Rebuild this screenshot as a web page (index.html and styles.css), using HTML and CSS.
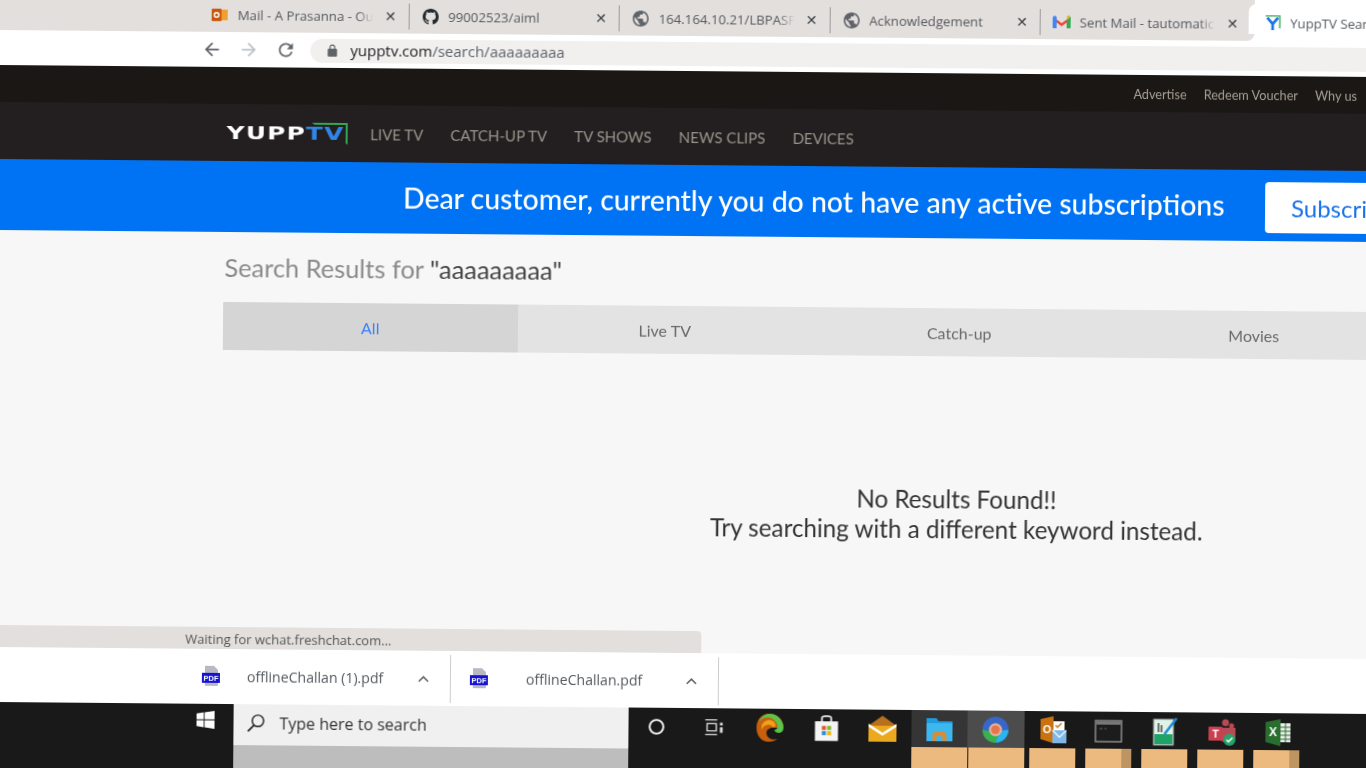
FILE: index.html
```html
<!DOCTYPE html>
<html lang="en">
<head>
    <meta charset="UTF-8">
    <title>YuppTV Search</title>
    <link rel="stylesheet" href="styles.css">
</head>
<body>
<div class="screen">
    <div class="tabstrip">
        <div class="tab">
            <svg class="favicon" viewBox="0 0 18 18"><rect x="6" y="3" width="12" height="12" fill="#f0a030"/><rect x="0" y="2" width="11" height="14" rx="1" fill="#c8570f"/><circle cx="5.5" cy="9" r="2.6" fill="none" stroke="#fff" stroke-width="1.6"/></svg>
            <span class="tab-title">Mail - A Prasanna - Ou</span>
            <span class="tab-close">&#10005;</span>
        </div>
        <div class="tab">
            <svg class="favicon" viewBox="0 0 16 16"><path fill="#24292e" d="M8 0C3.58 0 0 3.58 0 8c0 3.54 2.29 6.53 5.47 7.59.4.07.55-.17.55-.38 0-.19-.01-.82-.01-1.49-2.01.37-2.53-.49-2.69-.94-.09-.23-.48-.94-.82-1.13-.28-.15-.68-.52-.01-.53.63-.01 1.08.58 1.23.82.72 1.21 1.87.87 2.33.66.07-.52.28-.87.51-1.07-1.78-.2-3.64-.89-3.64-3.95 0-.87.31-1.59.82-2.15-.08-.2-.36-1.02.08-2.12 0 0 .67-.21 2.2.82.64-.18 1.32-.27 2-.27.68 0 1.36.09 2 .27 1.53-1.04 2.2-.82 2.2-.82.44 1.1.16 1.92.08 2.12.51.56.82 1.27.82 2.15 0 3.07-1.87 3.75-3.65 3.95.29.25.54.73.54 1.48 0 1.07-.01 1.93-.01 2.2 0 .21.15.46.55.38A8.013 8.013 0 0016 8c0-4.42-3.58-8-8-8z"/></svg>
            <span class="tab-title">99002523/aiml</span>
            <span class="tab-close">&#10005;</span>
        </div>
        <div class="tab">
            <svg class="favicon" viewBox="2 2 20 20"><path fill="#5f6368" d="M12 2C6.48 2 2 6.48 2 12s4.48 10 10 10 10-4.48 10-10S17.52 2 12 2zm-1 17.93c-3.95-.49-7-3.85-7-7.93 0-.62.08-1.21.21-1.79L9 15v1c0 1.1.9 2 2 2v1.93zm6.9-2.54c-.26-.81-1-1.39-1.9-1.39h-1v-3c0-.55-.45-1-1-1H8v-2h2c.55 0 1-.45 1-1V7h2c1.1 0 2-.9 2-2v-.41c2.93 1.19 5 4.06 5 7.41 0 2.08-.8 3.97-2.1 5.39z"/></svg>
            <span class="tab-title">164.164.10.21/LBPASP</span>
            <span class="tab-close">&#10005;</span>
        </div>
        <div class="tab">
            <svg class="favicon" viewBox="2 2 20 20"><path fill="#5f6368" d="M12 2C6.48 2 2 6.48 2 12s4.48 10 10 10 10-4.48 10-10S17.52 2 12 2zm-1 17.93c-3.95-.49-7-3.85-7-7.93 0-.62.08-1.21.21-1.79L9 15v1c0 1.1.9 2 2 2v1.93zm6.9-2.54c-.26-.81-1-1.39-1.9-1.39h-1v-3c0-.55-.45-1-1-1H8v-2h2c.55 0 1-.45 1-1V7h2c1.1 0 2-.9 2-2v-.41c2.93 1.19 5 4.06 5 7.41 0 2.08-.8 3.97-2.1 5.39z"/></svg>
            <span class="tab-title">Acknowledgement</span>
            <span class="tab-close">&#10005;</span>
        </div>
        <div class="tab tab-last">
            <svg class="favicon" viewBox="0 0 18 14"><path fill="#ea4335" d="M1 2l8 6 8-6v3l-8 6-8-6z"/><path fill="#4285f4" d="M0 3c0-2 2-3 3-2l1 1v11H1c-.6 0-1-.4-1-1z"/><path fill="#34a853" d="M18 3c0-2-2-3-3-2l-1 1v11h3c.6 0 1-.4 1-1z"/><path fill="#fbbc04" d="M14 2l1-1c1-.7 2 .2 2 1l-3 3z"/></svg>
            <span class="tab-title">Sent Mail - tautomatic</span>
            <span class="tab-close">&#10005;</span>
        </div>
        <div class="tab tab-active">
            <svg class="favicon" viewBox="0 0 18 18"><path fill="none" stroke="#1a73e8" stroke-width="3" d="M3 3l6 7 6-7M9 10v7"/><path fill="none" stroke="#34a853" stroke-width="1.5" d="M1 1h16v14"/></svg>
            <span class="tab-title">YuppTV Sear</span>
        </div>
    </div>

    <div class="toolbar">
        <svg class="tool-icon" viewBox="0 0 24 24"><path fill="#5f6368" d="M20 11H7.83l5.59-5.59L12 4l-8 8 8 8 1.41-1.41L7.83 13H20v-2z"/></svg>
        <svg class="tool-icon" viewBox="0 0 24 24"><path fill="#bdc1c6" d="M12 4l-1.41 1.41L16.17 11H4v2h12.17l-5.58 5.59L12 20l8-8z"/></svg>
        <svg class="tool-icon" viewBox="0 0 24 24"><path fill="#5f6368" d="M17.65 6.35A7.958 7.958 0 0012 4c-4.42 0-7.99 3.58-7.99 8s3.57 8 7.99 8c3.73 0 6.84-2.55 7.73-6h-2.08A5.99 5.99 0 0112 18c-3.31 0-6-2.69-6-6s2.69-6 6-6c1.66 0 3.14.69 4.22 1.78L13 11h7V4l-2.35 2.35z"/></svg>
        <div class="omnibox">
            <svg class="lock" viewBox="0 0 24 24"><path fill="#5f6368" d="M18 8h-1V6c0-2.76-2.24-5-5-5S7 3.24 7 6v2H6c-1.1 0-2 .9-2 2v10c0 1.1.9 2 2 2h12c1.1 0 2-.9 2-2V10c0-1.1-.9-2-2-2zM9 6c0-1.66 1.34-3 3-3s3 1.34 3 3v2H9V6z"/></svg>
            <span class="url"><b>yupptv.com</b>/search/aaaaaaaaa</span>
        </div>
    </div>

    <div class="topbar">
        <a>Advertise</a>
        <a>Redeem Voucher</a>
        <a>Why us</a>
    </div>

    <nav class="navbar">
        <div class="logo">
            <span class="logo-word"><span class="logo-yupp">YUPP</span><span class="logo-tv">TV</span></span>
            <svg class="logo-corner" viewBox="0 0 36 22"><path fill="#2fa84f" d="M0 0h36v22l-2-2V2H3z"/></svg>
        </div>
        <a>LIVE TV</a>
        <a>CATCH-UP TV</a>
        <a>TV SHOWS</a>
        <a>NEWS CLIPS</a>
        <a>DEVICES</a>
    </nav>

    <div class="banner">
        <span class="banner-text">Dear customer, currently you do not have any active subscriptions</span>
        <button class="subscribe">Subscribe</button>
    </div>

    <main class="results">
        <h2 class="results-title">Search Results for <em>"aaaaaaaaa"</em></h2>
        <div class="filters">
            <div class="filter filter-on">All</div>
            <div class="filter">Live TV</div>
            <div class="filter">Catch-up</div>
            <div class="filter">Movies</div>
        </div>
        <p class="no-results">No Results Found!!<br>Try searching with a different keyword instead.</p>
        <div class="status">Waiting for wchat.freshchat.com...</div>
    </main>

    <div class="downloads">
        <div class="download download-one">
            <svg class="pdf" viewBox="0 0 20 20"><path fill="#b9b9c4" d="M4 0h9l4 4v16H4z"/><rect x="1" y="7" width="18" height="10" fill="#1414d2"/><text x="10" y="15" text-anchor="middle" font-size="7.5" font-weight="700" font-family="Liberation Sans" fill="#fff">PDF</text></svg>
            <span class="file-name">offlineChallan (1).pdf</span>
            <svg class="chevron" viewBox="0 0 14 8"><path fill="none" stroke="#5f6368" stroke-width="1.7" d="M2 7l5-5 5 5"/></svg>
        </div>
        <div class="download download-two">
            <svg class="pdf" viewBox="0 0 20 20"><path fill="#b9b9c4" d="M4 0h9l4 4v16H4z"/><rect x="1" y="7" width="18" height="10" fill="#1414d2"/><text x="10" y="15" text-anchor="middle" font-size="7.5" font-weight="700" font-family="Liberation Sans" fill="#fff">PDF</text></svg>
            <span class="file-name">offlineChallan.pdf</span>
            <svg class="chevron" viewBox="0 0 14 8"><path fill="none" stroke="#5f6368" stroke-width="1.7" d="M2 7l5-5 5 5"/></svg>
        </div>
    </div>

    <div class="taskbar">
        <div class="start">
            <svg class="win" viewBox="0 0 20 20"><path fill="#fff" d="M0 3l8-1.2V9.500H0zM9 1.600L20 0v9.500H9zM0 10.500h8v7.700L0 17zM9 10.500h11V20L9 18.400z"/></svg>
        </div>
        <div class="searchbox">
            <div class="search-field">
                <svg class="search-icon" viewBox="0 0 20 20"><circle cx="12" cy="8" r="6" fill="none" stroke="#222" stroke-width="1.5"/><path stroke="#222" stroke-width="1.800" d="M8 12.500L1.500 19"/></svg>
                <span>Type here to search</span>
            </div>
        </div>
        <div class="task-icons">
            <div class="task"><svg class="ico" viewBox="0 0 24 24"><circle cx="12" cy="12" r="7.500" fill="none" stroke="#fff" stroke-width="2"/></svg></div>
            <div class="task"><svg class="ico" viewBox="0 0 24 24"><path fill="none" stroke="#ddd" stroke-width="1.500" d="M3 4h13M3 20h13M5 8h10v8H5z"/><rect x="19" y="7" width="3" height="3" fill="#ddd"/><rect x="19" y="12" width="3" height="6" fill="#ddd"/></svg></div>
            <div class="task"><svg class="ico ico-big" viewBox="0 0 28 30"><path fill="#c75f0c" d="M14 1C6 1 1 7 1 15c0 8 5 14 12 14 4 0 7-1 9-3-6 2-11-1-11-6 0-3 3-5 7-5h10C28 7 22 1 14 1z"/><path fill="#f0a11a" d="M6 14c1-6 7-8 11-6 3 2 4 5 2 6-2 1-3-2-6-2-3 0-6 2-7 6z"/><path fill="#5cc44a" d="M14 1c7 0 14 6 14 14 0 3-2 5-5 5-2 0-4-1-4-3 3 0 4-3 2-7-2-3-5-5-7-5-5-1-9 2-11 5C5 5 9 1 14 1z"/></svg></div>
            <div class="task"><svg class="ico ico-big" viewBox="0 0 24 26"><path fill="none" stroke="#eee" stroke-width="1.500" d="M8 8V4c0-2 8-2 8 0v4"/><rect x="2" y="7" width="20" height="17" fill="#f4f4f4"/><rect x="8" y="11" width="3.500" height="3.500" fill="#e8542a"/><rect x="12.500" y="11" width="3.500" height="3.500" fill="#7ab82a"/><rect x="8" y="15.500" width="3.500" height="3.500" fill="#2a8ce0"/><rect x="12.500" y="15.500" width="3.500" height="3.500" fill="#f4b400"/></svg></div>
            <div class="task"><svg class="ico ico-big" viewBox="0 0 28 28"><path fill="#b8701c" d="M14 1L0 11h28z"/><rect y="11" width="28" height="16" fill="#eba91f"/><path fill="#fff" d="M0 9l14 9 14-9v3L14 21 0 12z"/></svg></div>
            <div class="task task-open"><svg class="ico ico-big" viewBox="0 0 28 28"><path fill="#1f9be0" d="M1 3h10l2 3h14v20H1z"/><path fill="#3db8ee" d="M1 8h26v18H1z"/><path fill="#d98c33" d="M7 20c0-3 3-4 7-4s7 1 7 4v6h-4v-5h-6v5H7z"/></svg></div>
            <div class="task task-open task-active"><svg class="ico ico-big" viewBox="0 0 28 28"><circle cx="14" cy="14" r="13" fill="#3867c9"/><path fill="#37b24d" d="M1 14c0 8 6 13 13 13l5-12H5z"/><path fill="#29b6ee" d="M27 14c0 7-6 13-13 13l5-12z"/><circle cx="14" cy="14" r="6.500" fill="#eab8a0"/><circle cx="14" cy="14" r="4.500" fill="#e6754d"/></svg></div>
            <div class="task"><svg class="ico ico-big" viewBox="0 0 28 30"><path fill="#c9720f" d="M2 4l13-3v27L2 24z"/><text x="8.500" y="18" text-anchor="middle" font-size="11" font-weight="700" font-family="Liberation Sans" fill="#fff">O</text><rect x="15" y="6" width="11" height="9" fill="#fff"/><path fill="none" stroke="#c9720f" stroke-width="1.500" d="M17 10l2 2 4-4"/><rect x="14" y="15" width="14" height="13" fill="#7fb8e8"/><path fill="none" stroke="#fff" stroke-width="1.200" d="M14 15l7 7 7-7"/></svg></div>
            <div class="task"><svg class="ico ico-big" viewBox="0 0 28 28"><rect x="1" y="4" width="26" height="21" fill="#1c1c1c" stroke="#8b8b8b" stroke-width="1.500"/><rect x="2" y="5" width="24" height="3" fill="#777"/><path stroke="#666" stroke-width="1" d="M5 12h3M10 12h2"/></svg></div>
            <div class="task"><svg class="ico ico-big" viewBox="0 0 28 30"><rect x="2" y="3" width="20" height="26" fill="#dff2e8" stroke="#888"/><rect x="3" y="18" width="18" height="10" fill="#1fa468"/><path stroke="#444" stroke-width="1.500" d="M7 7v9M10 9v7"/><path stroke="#1e88d8" stroke-width="2.500" d="M13 18L25 2"/></svg></div>
            <div class="task"><svg class="ico ico-big" viewBox="0 0 28 30"><circle cx="18" cy="6" r="3.500" fill="#b84a55"/><circle cx="24" cy="9" r="2.500" fill="#b84a55"/><path fill="#b84a55" d="M10 11h18v10c0 4-4 5-8 5s-7-2-8-5z"/><rect x="1" y="10" width="14" height="14" rx="1" fill="#c9404f"/><text x="8" y="21" text-anchor="middle" font-size="11" font-weight="700" font-family="Liberation Sans" fill="#fff">T</text><circle cx="22" cy="23" r="6" fill="#25a56a"/><path fill="none" stroke="#fff" stroke-width="1.500" d="M19 23l2 2 4-4"/></svg></div>
            <div class="task"><svg class="ico ico-big" viewBox="0 0 28 30"><path fill="#2a6e2f" d="M1 5l15-3v27L1 25z"/><text x="8.500" y="19" text-anchor="middle" font-size="12" font-weight="700" font-family="Liberation Sans" fill="#fff">X</text><rect x="16" y="6" width="10" height="19" fill="#eee"/><path stroke="#2a6e2f" stroke-width="1" d="M16 10h10M16 14h10M16 18h10M16 22h10M21 6v19"/></svg></div>
        </div>
    </div>
    <div class="thumbs">
        <div class="thumb"></div>
        <div class="thumb"></div>
        <div class="thumb thumb-narrow"></div>
        <div class="thumb thumb-narrow thumb-shade"></div>
        <div class="thumb thumb-narrow"></div>
        <div class="thumb thumb-narrow"></div>
        <div class="thumb thumb-narrow thumb-shade"></div>
    </div>
</div>
</body>
</html>
```

FILE: styles.css
```css
html, body {
    margin: 0;
    padding: 0;
    height: 100%;
    overflow: hidden;
    background-color: #fff;
}
/* the photo of the monitor sits slightly skewed */
.screen {
    position: relative;
    width: 1420px;
    transform: rotate(0.5deg);
    transform-origin: 0 0;
    filter: blur(0.3px);
    font-family: 'Lato', sans-serif;
}

/* browser tabs */
.tabstrip {
    display: flex;
    width: 1255px;
    height: 50px;
    margin-top: -20px;
    padding: 20px 0 0 199px;
    box-sizing: border-box;
    background-color: #e3dfdd;
    font-family: 'Open Sans', sans-serif;
    border-bottom-right-radius: 8px;
}
.tab {
    display: flex;
    flex: none;
    align-items: center;
    width: 210.5px;
    height: 26px;
    padding-left: 12px;
    box-sizing: border-box;
    border-right: 1px solid #9a9a9a;
    color: #55595e;
    font-size: 13.2px;
}
.tab-last {
    border-right: none;
}
.tab-active {
    flex: none;
    width: 180px;
    height: 30px;
    margin: -7px 0 0 -3px;
    padding: 7px 0 0 15px;
    background-color: #fff;
    border: none;
    border-radius: 8px 8px 0 0;
}
.favicon {
    flex: none;
    width: 18px;
    height: 16px;
    margin-right: 9px;
}
.tab-title {
    flex: none;
    width: 136px;
    overflow: hidden;
    white-space: nowrap;
    -webkit-mask-image: linear-gradient(to right, #000 88%, transparent);
}
.tab-active .tab-title {
    -webkit-mask-image: none;
}
.tab-close {
    margin-left: 11px;
    color: #3c4043;
    font-family: 'DejaVu Sans', sans-serif;
    font-size: 14px;
    font-weight: 700;
}

/* address bar */
.toolbar {
    display: flex;
    align-items: center;
    height: 35px;
    padding-left: 202px;
    box-sizing: border-box;
    background-color: #fff;
}
.tool-icon {
    width: 21px;
    height: 21px;
    margin-right: 16px;
}
.omnibox {
    display: flex;
    align-items: center;
    flex: 1;
    height: 24px;
    margin-left: -2px;
    padding-left: 15px;
    background-color: #f1f0ef;
    border-radius: 12px 0 0 12px;
}
.lock {
    width: 14px;
    height: 14px;
    margin-right: 11px;
}
.url {
    margin-top: -2px;
    color: #5f6368;
    font-family: 'Open Sans', sans-serif;
    font-size: 15px;
}
.url b {
    color: #202124;
    font-weight: 400;
}

/* site header */
.topbar {
    display: flex;
    justify-content: flex-end;
    align-items: center;
    gap: 17px;
    height: 37px;
    padding-right: 62px;
    background-color: #1a1714;
    color: #a89f94;
    font-size: 12.7px;
}
.navbar {
    display: flex;
    align-items: center;
    height: 57px;
    padding-left: 228px;
    background-color: #231f20;
    color: #9a948c;
    font-size: 15px;
}
.navbar a {
    margin-right: 27.2px;
}
.logo {
    position: relative;
    flex: none;
    width: 143.5px;
    height: 22px;
    line-height: 22px;
    font-family: 'DejaVu Sans', sans-serif;
    font-size: 19px;
    font-weight: 700;
    letter-spacing: 1px;
}
.logo-word {
    display: inline-block;
    transform: scale(1.3, 0.9);
    transform-origin: 0 50%;
}
.logo-yupp {
    color: #fff;
}
.logo-tv {
    color: #2f86e8;
}
.logo-corner {
    position: absolute;
    left: 85px;
    top: 0;
    width: 36px;
    height: 22px;
}

/* subscription banner */
.banner {
    display: flex;
    align-items: center;
    height: 71px;
    padding-left: 405px;
    background-color: #0073f5;
}
.banner-text {
    flex: none;
    width: 862px;
    margin-top: -2px;
    color: #fff;
    font-size: 28.4px;
    font-weight: 500;
    white-space: nowrap;
}
.subscribe {
    flex: none;
    width: 160px;
    height: 51px;
    margin-top: 3px;
    padding: 0 0 0 26px;
    border: none;
    border-radius: 4px;
    background-color: #fff;
    color: #1a73e8;
    font-family: 'Lato', sans-serif;
    font-size: 24px;
    text-align: left;
}

/* results */
.results {
    height: 417px;
    padding: 1px 0 0 226px;
    box-sizing: border-box;
    background-color: #f7f7f7;
    position: relative;
    overflow: hidden;
}
.results-title {
    margin: 19px 0 20px 1px;
    color: #8a8a8a;
    font-size: 25.4px;
    font-weight: 400;
    line-height: 30px;
}
.results-title em {
    color: #444;
    font-style: normal;
}
.filters {
    display: flex;
    width: 1178px;
    height: 48px;
    background-color: #e4e3e3;
}
.filter {
    flex: 1;
    display: flex;
    align-items: center;
    justify-content: center;
    color: #6a6a6a;
    font-size: 16px;
}
.filter-on {
    background-color: #d6d5d5;
    color: #3b82f6;
}
.no-results {
    width: 888px;
    margin: 128px 0 0 291px;
    color: #333;
    font-size: 24.2px;
    line-height: 30px;
    text-align: center;
}
.status {
    position: absolute;
    left: 0;
    bottom: 0;
    width: 707px;
    height: 22px;
    padding: 3px 0 0 191px;
    box-sizing: border-box;
    background-color: #e2dfdd;
    border-top-right-radius: 4px;
    color: #555;
    font-family: 'Open Sans', sans-serif;
    font-size: 13px;
}

/* download shelf */
.downloads {
    display: flex;
    height: 55px;
    background-color: #fff;
    font-family: 'Open Sans', sans-serif;
    font-size: 14.1px;
    color: #55595e;
}
.download {
    display: flex;
    align-items: center;
    flex: none;
    height: 48px;
    margin-top: 4px;
    border-right: 1px solid #ccc;
    box-sizing: border-box;
}
.download-one {
    width: 457px;
    padding-left: 207px;
}
.download-two {
    width: 268px;
    padding-left: 18px;
}
.pdf {
    flex: none;
    width: 20px;
    height: 20px;
    margin-top: -3px;
}
.file-name {
    flex: none;
    margin-top: -1px;
}
.download-one .file-name {
    width: 170px;
    margin-left: 26px;
}
.download-two .file-name {
    width: 159px;
    margin-left: 37px;
}
.chevron {
    width: 13px;
    height: 8px;
}

/* windows taskbar */
.taskbar {
    display: flex;
    height: 37px;
    background-color: #191919;
}
.start {
    display: flex;
    align-items: center;
    width: 240px;
    padding-left: 203px;
    padding-bottom: 6px;
    box-sizing: border-box;
}
.win {
    width: 18px;
    height: 18px;
}
.searchbox {
    flex: none;
    width: 395px;
    height: 72px;
    background-color: #bdbdbd;
}
.search-field {
    display: flex;
    align-items: center;
    height: 41px;
    padding-left: 13px;
    background-color: #f0f0f0;
    color: #333;
    font-family: 'Open Sans', sans-serif;
    font-size: 16px;
}
.search-field span {
    margin-top: -4px;
}
.search-icon {
    width: 19px;
    height: 19px;
    margin: -4px 14px 0 0;
}
.task-icons {
    display: flex;
}
.task {
    display: flex;
    align-items: center;
    justify-content: center;
    flex: none;
    width: 56.5px;
    height: 37px;
}
.task-open {
    background-color: #353535;
}
.task-active {
    background-color: #4c4c4c;
}
.ico {
    width: 22px;
    height: 22px;
}
.ico-big {
    width: 28px;
    height: 30px;
}
.thumbs {
    display: flex;
    height: 40px;
    padding-left: 918px;
    background-color: #191919;
}
.thumb {
    flex: none;
    width: 56px;
    height: 100%;
    margin-right: 1px;
    background-color: #ecba7e;
}
.thumb-narrow {
    width: 46px;
    margin: 0 6px 0 4px;
}
.thumb-shade {
    background: linear-gradient(to right, #ecba7e 78%, #bd9563 78%);
}
```
